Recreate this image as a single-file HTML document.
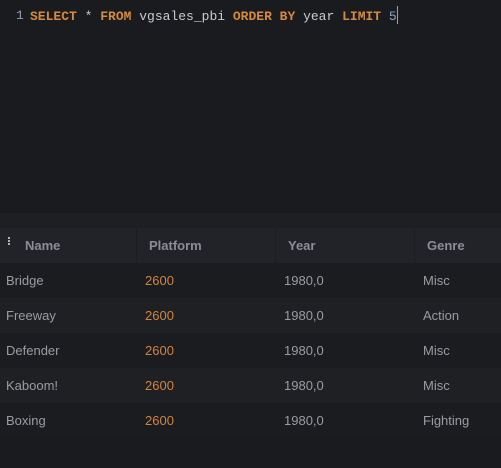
<!DOCTYPE html>
<html><head><meta charset="utf-8"><style>
html,body{margin:0;padding:0;width:501px;height:468px;background:#1a1b1f;overflow:hidden;font-family:"Liberation Sans",sans-serif}
.code{position:absolute;left:0;top:6px;height:20px;font-family:"Liberation Mono",monospace;font-size:13px;color:#c9cbd0;white-space:pre;line-height:20px}
.ln{position:absolute;left:16px;color:#9a9ca2}
.src{position:absolute;left:30px}
.k{color:#d58a3f;font-weight:bold}
.n{color:#8fa2bf}
.cur{display:inline-block;width:1px;height:18px;background:#8fa2bf;vertical-align:-4px}
.band{position:absolute;left:0;top:213px;width:501px;height:15px;background:#1e1f23}
.hdr{position:absolute;left:0;top:228px;width:501px;height:35px;background:#222328}
.row{position:absolute;left:0;width:501px;height:35px}
.c{position:absolute;top:0;line-height:35px;font-size:13px;color:#9a9ca2}
.h{font-weight:bold;color:#8c8e95}
.sep{position:absolute;top:0;width:1px;height:35px;background:#1c1d21}
.o{color:#d0853e}
.dots{position:absolute;left:8px;top:9px;width:2px}
.dots i{display:block;width:2px;height:2px;background:#b0b2b8;margin-bottom:1px}
</style></head><body>
<div class="code"><span class="ln">1</span><span class="src"><span class="k">SELECT</span> * <span class="k">FROM</span> vgsales_pbi <span class="k">ORDER BY</span> year <span class="k">LIMIT</span> <span class="n">5</span><span class="cur"></span></span></div>
<div class="band"></div>
<div class="hdr">
<div class="dots"><i></i><i></i><i></i></div>
<div class="c h" style="left:25px">Name</div>
<div class="sep" style="left:136px"></div>
<div class="c h" style="left:149px">Platform</div>
<div class="sep" style="left:275px"></div>
<div class="c h" style="left:288px">Year</div>
<div class="sep" style="left:414px"></div>
<div class="c h" style="left:427px">Genre</div>
</div>
<div class="row" style="top:263px;background:#1b1c20"><div class="c" style="left:6px">Bridge</div><div class="c o" style="left:145px">2600</div><div class="c" style="left:284px">1980,0</div><div class="c" style="left:423px">Misc</div></div>
<div class="row" style="top:298px;background:#1f2024"><div class="c" style="left:6px">Freeway</div><div class="c o" style="left:145px">2600</div><div class="c" style="left:284px">1980,0</div><div class="c" style="left:423px">Action</div></div>
<div class="row" style="top:333px;background:#1b1c20"><div class="c" style="left:6px">Defender</div><div class="c o" style="left:145px">2600</div><div class="c" style="left:284px">1980,0</div><div class="c" style="left:423px">Misc</div></div>
<div class="row" style="top:368px;background:#1f2024"><div class="c" style="left:6px">Kaboom!</div><div class="c o" style="left:145px">2600</div><div class="c" style="left:284px">1980,0</div><div class="c" style="left:423px">Misc</div></div>
<div class="row" style="top:403px;background:#1b1c20"><div class="c" style="left:6px">Boxing</div><div class="c o" style="left:145px">2600</div><div class="c" style="left:284px">1980,0</div><div class="c" style="left:423px">Fighting</div></div>
</body></html>
